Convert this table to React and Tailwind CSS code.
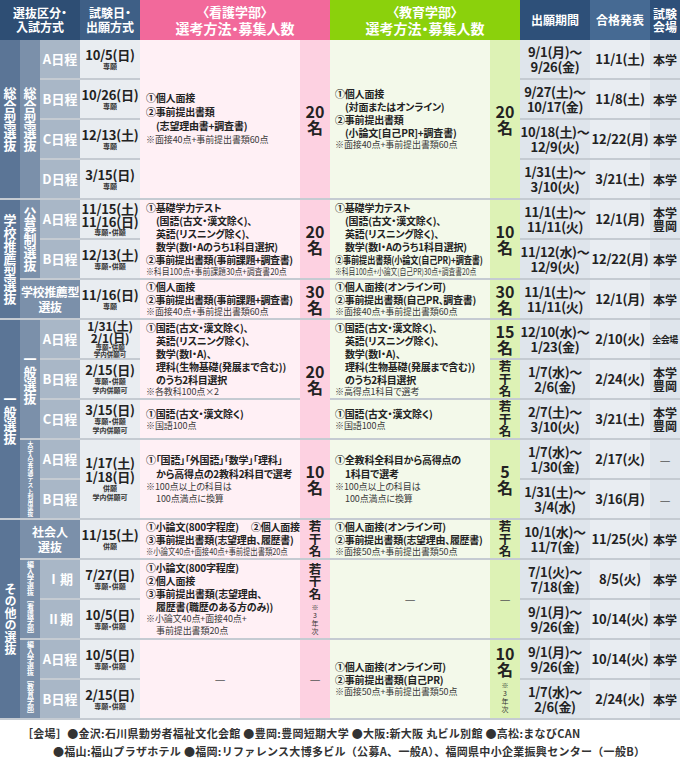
import React from 'react';

const COLS = 'grid grid-cols-[20px_20px_40px_60px_160px_30px_160px_30px_70px_60px_30px]';

const COL = ['', 'col-start-1', 'col-start-2', 'col-start-3', 'col-start-4', 'col-start-5', 'col-start-6', 'col-start-7', 'col-start-8', 'col-start-9', 'col-start-10', 'col-start-11'];
const ROW = ['', 'row-start-1', 'row-start-2', 'row-start-3', 'row-start-4', 'row-start-5', 'row-start-6', 'row-start-7', 'row-start-8', 'row-start-9', 'row-start-10', 'row-start-11', 'row-start-12', 'row-start-13', 'row-start-14', 'row-start-15', 'row-start-16', 'row-start-17'];
const SPAN = ['', '', 'row-span-2', 'row-span-3', 'row-span-4', 'row-span-5'];

const Cell = ({ c, r, span = 1, wide, className = '', children }) => (
  <div className={`${COL[c]} ${ROW[r]} ${SPAN[span]} ${wide ? 'col-span-2' : ''} flex flex-col justify-center ${className}`}>
    {children}
  </div>
);

// vertical label
const V = ({ className = '', children }) => (
  <span className={`[writing-mode:vertical-rl] [font-feature-settings:normal] font-bold text-white leading-none whitespace-nowrap ${className}`}>{children}</span>
);

// method lines
const M = ({ i, className = '', children }) => (
  <div className={`whitespace-nowrap font-bold text-[10px] leading-[13px] tracking-[-0.2px] text-[#222] ${i ? 'pl-[10px]' : ''} ${className}`}>
    {children}
  </div>
);
const Note = ({ i, className = '', children }) => (
  <div className={`whitespace-nowrap text-[9px] leading-[12px] tracking-[-0.1px] text-[#3a3a3a] ${i ? 'pl-[10px]' : ''} ${className}`}>
    {children}
  </div>
);

const Num = ({ n }) => (
  <>
    <div className="text-[16px] leading-[16px] font-bold">{n}</div>
    <div className="text-[16px] leading-[17px] font-bold">名</div>
  </>
);
const Jakkan = () => (
  <div className="flex flex-col items-center text-[12.5px] leading-[12.5px] font-bold [font-feature-settings:normal]">
    <span>若</span>
    <span>干</span>
    <span>名</span>
  </div>
);
const Third = () => (
  <div className="flex flex-col items-center text-[7px] leading-[8px] mt-[3px] text-[#333] [font-feature-settings:normal]">
    <span>※</span>
    <span>3</span>
    <span>年</span>
    <span>次</span>
  </div>
);
const Dash = () => <div className="text-[12px] text-[#555]">—</div>;

const sched = [
  [1, 'A日程'], [2, 'B日程'], [3, 'C日程'], [4, 'D日程'], [5, 'A日程'], [6, 'B日程'],
  [8, 'A日程'], [9, 'B日程'], [10, 'C日程'], [11, 'A日程'], [12, 'B日程'],
  [14, 'Ⅰ期'], [15, 'Ⅱ期'], [16, 'A日程'], [17, 'B日程'],
];

const dates = [
  { r: 1, d: ['10/5(日)'], k: ['専願'] },
  { r: 2, d: ['10/26(日)'], k: ['専願'] },
  { r: 3, d: ['12/13(土)'], k: ['専願'] },
  { r: 4, d: ['3/15(日)'], k: ['専願'] },
  { r: 5, d: ['11/15(土)', '11/16(日)'], k: ['専願・併願'], mid: true },
  { r: 6, d: ['12/13(土)'], k: ['専願・併願'] },
  { r: 7, d: ['11/16(日)'], k: ['専願'] },
  { r: 8, d: ['1/31(土)', '2/1(日)'], k: ['専願・併願', '学内併願可'], tight: true },
  { r: 9, d: ['2/15(日)'], k: ['専願・併願', '学内併願可'] },
  { r: 10, d: ['3/15(日)'], k: ['専願・併願', '学内併願可'] },
  { r: 11, span: 2, d: ['1/17(土)', '1/18(日)'], k: ['併願', '学内併願可'] },
  { r: 13, d: ['11/15(土)'], k: ['併願'] },
  { r: 14, d: ['7/27(日)'], k: ['専願・併願'] },
  { r: 15, d: ['10/5(日)'], k: ['専願・併願'] },
  { r: 16, d: ['10/5(日)'], k: ['専願・併願'] },
  { r: 17, d: ['2/15(日)'], k: ['専願・併願'] },
];

const terms = [
  ['9/1(月)〜', '9/26(金)', '11/1(土)', ['本学']],
  ['9/27(土)〜', '10/17(金)', '11/8(土)', ['本学']],
  ['10/18(土)〜', '12/9(火)', '12/22(月)', ['本学']],
  ['1/31(土)〜', '3/10(火)', '3/21(土)', ['本学']],
  ['11/1(土)〜', '11/11(火)', '12/1(月)', ['本学', '豊岡']],
  ['11/12(水)〜', '12/9(火)', '12/22(月)', ['本学']],
  ['11/1(土)〜', '11/11(火)', '12/1(月)', ['本学']],
  ['12/10(水)〜', '1/23(金)', '2/10(火)', ['全会場']],
  ['1/7(水)〜', '2/6(金)', '2/24(火)', ['本学', '豊岡']],
  ['2/7(土)〜', '3/10(火)', '3/21(土)', ['本学', '豊岡']],
  ['1/7(水)〜', '1/30(金)', '2/17(火)', ['—']],
  ['1/31(土)〜', '3/4(水)', '3/16(月)', ['—']],
  ['10/1(水)〜', '11/7(金)', '11/25(火)', ['本学']],
  ['7/1(火)〜', '7/18(金)', '8/5(火)', ['本学']],
  ['9/1(月)〜', '9/26(金)', '10/14(火)', ['本学']],
  ['9/1(月)〜', '9/26(金)', '10/14(火)', ['本学']],
  ['1/7(水)〜', '2/6(金)', '2/24(火)', ['本学']],
];

const Header = () => (
  <div className={`${COLS} h-[40px] text-white font-bold text-center`}>
    <div className="col-span-3 bg-[#2e4e74] flex flex-col justify-center text-[12px] leading-[14px]">
      <span>選抜区分・</span>
      <span>入試方式</span>
    </div>
    <div className="bg-[#3e5f86] flex flex-col justify-center text-[12px] leading-[14px]">
      <span>試験日・</span>
      <span>出願方式</span>
    </div>
    <div className="col-span-2 bg-[#f2699b] flex flex-col justify-center">
      <span className="text-[13px] leading-[16px]">〈看護学部〉</span>
      <span className="text-[14px] leading-[17px]">選考方法・募集人数</span>
    </div>
    <div className="col-span-2 bg-[#8bd10c] flex flex-col justify-center">
      <span className="text-[13px] leading-[16px]">〈教育学部〉</span>
      <span className="text-[14px] leading-[17px]">選考方法・募集人数</span>
    </div>
    <div className="bg-[#2e5079] flex items-center justify-center text-[12px]">出願期間</div>
    <div className="bg-[#466a93] flex items-center justify-center text-[12px]">合格発表</div>
    <div className="bg-[#2e5079] flex flex-col justify-center text-[12px] leading-[13px]">
      <span>試験</span>
      <span>会場</span>
    </div>
  </div>
);

const App = () => {
  const nurse = 'items-start pl-[6px] bg-[#fff0f5]';
  const edu = 'items-start pl-[5px] bg-[#f3f9ea]';
  const nCount = 'items-center bg-[#fdd1e1] text-[#222]';
  const eCount = 'items-center bg-[#ddf2b5] text-[#222]';

  return (
    <div className="w-[680px] h-[760px] bg-white overflow-hidden font-['Noto_Sans_CJK_JP','Noto_Sans',sans-serif] [font-feature-settings:'palt'] text-[#222]">
      <Header />

      <div className={`${COLS} grid-rows-[repeat(17,38px)] gap-y-[2px] bg-[#c5cbd2] border-b-2 border-[#c5cbd2]`}>
        {/* outer category */}
        <Cell c={1} r={1} span={4} className="items-center bg-[#5b7596]"><V className="text-[13px]">総合型選抜</V></Cell>
        <Cell c={1} r={5} span={3} className="items-center bg-[#5b7596]"><V className="text-[13px]">学校推薦型選抜</V></Cell>
        <Cell c={1} r={8} span={5} className="items-center bg-[#5b7596]"><V className="text-[13px]">一般選抜</V></Cell>
        <Cell c={1} r={13} span={5} className="items-center bg-[#5b7596]"><V className="text-[12px]">その他の選抜</V></Cell>

        {/* sub category */}
        <Cell c={2} r={1} span={4} className="items-center bg-[#7b90aa]"><V className="text-[13px]">総合型選抜</V></Cell>
        <Cell c={2} r={5} span={2} className="items-center bg-[#7b90aa]"><V className="text-[13px]">公募制選抜</V></Cell>
        <Cell c={2} r={7} wide className="items-center bg-[#7b90aa] text-white font-bold text-[12px] leading-[15px] whitespace-nowrap tracking-[-0.4px]">
          <span>学校推薦型</span>
          <span>選抜</span>
        </Cell>
        <Cell c={2} r={8} span={3} className="items-center bg-[#7b90aa]"><V className="text-[13px]">一般選抜</V></Cell>
        <Cell c={2} r={11} span={2} className="items-center bg-[#7b90aa]"><V className="text-[5.8px]">大学入学共通テスト利用選抜</V></Cell>
        <Cell c={2} r={13} wide className="items-center bg-[#7b90aa] text-white font-bold text-[12px] leading-[15px] whitespace-nowrap">
          <span>社会人</span>
          <span>選抜</span>
        </Cell>
        <Cell c={2} r={14} span={2} className="items-center bg-[#7b90aa]"><V className="text-[7px]">編入学選抜［看護学部］</V></Cell>
        <Cell c={2} r={16} span={2} className="items-center bg-[#7b90aa]"><V className="text-[7px]">編入学選抜［教育学部］</V></Cell>

        {/* schedule */}
        {sched.map(([r, t]) => (
          <Cell key={`s${r}`} c={3} r={r} className="items-center bg-[#a9b7c7] text-white font-bold text-[13px]">
            {t}
          </Cell>
        ))}

        {/* exam date */}
        {dates.map((x) => (
          <Cell key={`d${x.r}`} c={4} r={x.r} span={x.span || 1} className="items-center bg-[#e9edf1] text-[#222] whitespace-nowrap">
            {x.d.map((d) => (
              <div
                key={d}
                className={`font-bold tracking-[-0.2px] ${x.tight ? 'text-[12px] leading-[12px]' : x.mid ? 'text-[13px] leading-[13px]' : 'text-[13px] leading-[14px]'}`}
              >
                {d}
              </div>
            ))}
            {x.k.map((k) => (
              <div key={k} className={`font-bold text-[#333] ${x.tight ? 'text-[6.5px] leading-[7px]' : 'text-[7px] leading-[9px]'}`}>{k}</div>
            ))}
          </Cell>
        ))}

        {/* 看護学部 */}
        <Cell c={5} r={1} span={4} className={nurse}>
          <M className="leading-[14px]">①個人面接</M>
          <M className="leading-[14px]">②事前提出書類</M>
          <M i className="leading-[14px]">(志望理由書+調査書)</M>
          <Note className="leading-[14px]">※面接40点+事前提出書類60点</Note>
        </Cell>
        <Cell c={6} r={1} span={4} className={nCount}><Num n="20" /></Cell>

        <Cell c={5} r={5} span={2} className={nurse}>
          <M className="leading-[12px]">①基礎学力テスト</M>
          <M i className="leading-[12px]">(国語(古文・漢文除く)、</M>
          <M i className="leading-[12px]">英語(リスニング除く)、</M>
          <M i className="leading-[12px]">数学(数I・Aのうち1科目選択)</M>
          <M className="leading-[12px] tracking-[-0.4px]">②事前提出書類(事前課題+調査書)</M>
          <Note className="text-[8px] leading-[11px] scale-x-[0.88] origin-left">※科目100点+事前課題30点+調査書20点</Note>
        </Cell>
        <Cell c={6} r={5} span={2} className={nCount}><Num n="20" /></Cell>

        <Cell c={5} r={7} className={nurse}>
          <M className="leading-[12px]">①個人面接</M>
          <M className="leading-[12px] tracking-[-0.4px]">②事前提出書類(事前課題+調査書)</M>
          <Note className="leading-[11px]">※面接40点+事前提出書類60点</Note>
        </Cell>
        <Cell c={6} r={7} className={nCount}><Num n="30" /></Cell>

        <Cell c={5} r={8} span={2} className={nurse}>
          <M>①国語(古文・漢文除く)、</M>
          <M i>英語(リスニング除く)、</M>
          <M i>数学(数I・A)、</M>
          <M i>理科(生物基礎(発展まで含む))</M>
          <M i>のうち2科目選択</M>
          <Note>※各教科100点×2</Note>
        </Cell>
        <Cell c={5} r={10} className={nurse}>
          <M>①国語(古文・漢文除く)</M>
          <Note>※国語100点</Note>
        </Cell>
        <Cell c={6} r={8} span={3} className={nCount}><Num n="20" /></Cell>

        <Cell c={5} r={11} span={2} className={nurse}>
          <M className="leading-[14px]">①「国語」「外国語」「数学」「理科」</M>
          <M i className="leading-[14px]">から高得点の2教科2科目で選考</M>
          <Note className="leading-[11px]">※100点以上の科目は</Note>
          <Note i className="leading-[11px]">100点満点に換算</Note>
        </Cell>
        <Cell c={6} r={11} span={2} className={nCount}><Num n="10" /></Cell>

        <Cell c={5} r={13} className={nurse}>
          <M className="text-[9.5px] leading-[12px]">①小論文(800字程度)<span className="ml-[12px]">②個人面接</span></M>
          <M className="text-[9.5px] leading-[12px] tracking-[-0.3px]">③事前提出書類(志望理由、履歴書)</M>
          <Note className="text-[8px] leading-[11px] scale-x-[0.82] origin-left">※小論文40点+面接40点+事前提出書類20点</Note>
        </Cell>
        <Cell c={6} r={13} className={nCount}><Jakkan /></Cell>

        <Cell c={5} r={14} span={2} className={nurse}>
          <M>①小論文(800字程度)</M>
          <M>②個人面接</M>
          <M>③事前提出書類(志望理由、</M>
          <M i>履歴書(職歴のある方のみ))</M>
          <Note>※小論文40点+面接40点+</Note>
          <Note i>事前提出書類20点</Note>
        </Cell>
        <Cell c={6} r={14} span={2} className={nCount}>
          <Jakkan />
          <Third />
        </Cell>

        <Cell c={5} r={16} span={2} className="items-center bg-[#fff0f5]"><Dash /></Cell>
        <Cell c={6} r={16} span={2} className={nCount}><Dash /></Cell>

        {/* 教育学部 */}
        <Cell c={7} r={1} span={4} className={edu}>
          <M>①個人面接</M>
          <M i>(対面またはオンライン)</M>
          <M>②事前提出書類</M>
          <M i>(小論文[自己PR]+調査書)</M>
          <Note>※面接40点+事前提出書類60点</Note>
        </Cell>
        <Cell c={8} r={1} span={4} className={eCount}><Num n="20" /></Cell>

        <Cell c={7} r={5} span={2} className={edu}>
          <M className="leading-[12px]">①基礎学力テスト</M>
          <M i className="leading-[12px]">(国語(古文・漢文除く)、</M>
          <M i className="leading-[12px]">英語(リスニング除く)、</M>
          <M i className="leading-[12px]">数学(数I・Aのうち1科目選択)</M>
          <M className="text-[9.5px] leading-[12px] tracking-[-0.2px] scale-x-[0.82] origin-left">②事前提出書類(小論文(自己PR)+調査書)</M>
          <Note className="text-[8px] leading-[11px] scale-x-[0.76] origin-left">※科目100点+小論文(自己PR)30点+調査書20点</Note>
        </Cell>
        <Cell c={8} r={5} span={2} className={eCount}><Num n="10" /></Cell>

        <Cell c={7} r={7} className={edu}>
          <M className="leading-[12px]">①個人面接(オンライン可)</M>
          <M className="leading-[12px] tracking-[-0.3px]">②事前提出書類(自己PR、調査書)</M>
          <Note className="leading-[11px]">※面接40点+事前提出書類60点</Note>
        </Cell>
        <Cell c={8} r={7} className={eCount}><Num n="30" /></Cell>

        <Cell c={7} r={8} span={2} className={edu}>
          <M>①国語(古文・漢文除く)、</M>
          <M i>英語(リスニング除く)、</M>
          <M i>数学(数I・A)、</M>
          <M i>理科(生物基礎(発展まで含む))</M>
          <M i>のうち2科目選択</M>
          <Note>※高得点1科目で選考</Note>
        </Cell>
        <Cell c={8} r={8} className={eCount}><Num n="15" /></Cell>
        <Cell c={8} r={9} className={eCount}><Jakkan /></Cell>

        <Cell c={7} r={10} className={edu}>
          <M>①国語(古文・漢文除く)</M>
          <Note>※国語100点</Note>
        </Cell>
        <Cell c={8} r={10} className={eCount}><Jakkan /></Cell>

        <Cell c={7} r={11} span={2} className={edu}>
          <M className="leading-[14px]">①全教科全科目から高得点の</M>
          <M i className="leading-[14px]">1科目で選考</M>
          <Note className="leading-[11px]">※100点以上の科目は</Note>
          <Note i className="leading-[11px]">100点満点に換算</Note>
        </Cell>
        <Cell c={8} r={11} span={2} className={eCount}><Num n="5" /></Cell>

        <Cell c={7} r={13} className={edu}>
          <M className="leading-[12px]">①個人面接(オンライン可)</M>
          <M className="leading-[12px] tracking-[-0.3px]">②事前提出書類(志望理由、履歴書)</M>
          <Note className="leading-[11px]">※面接50点+事前提出書類50点</Note>
        </Cell>
        <Cell c={8} r={13} className={eCount}><Jakkan /></Cell>

        <Cell c={7} r={14} span={2} className="items-center bg-[#f3f9ea]"><Dash /></Cell>
        <Cell c={8} r={14} span={2} className={eCount}><Dash /></Cell>

        <Cell c={7} r={16} span={2} className={edu}>
          <M>①個人面接(オンライン可)</M>
          <M>②事前提出書類(自己PR)</M>
          <Note>※面接50点+事前提出書類50点</Note>
        </Cell>
        <Cell c={8} r={16} span={2} className={eCount}>
          <Num n="10" />
          <Third />
        </Cell>

        {/* period / result / venue */}
        {terms.map(([a, b, res, venue], idx) => (
          <React.Fragment key={`t${idx}`}>
            <Cell c={9} r={idx + 1} className="items-center bg-[#dfe5ec] font-bold text-[13px] leading-[15px] tracking-[-0.3px] whitespace-nowrap">
              <span>{a}</span>
              <span>{b}</span>
            </Cell>
            <Cell c={10} r={idx + 1} className="items-center bg-[#e9edf2] font-bold text-[13px] tracking-[-0.2px] whitespace-nowrap">
              {res}
            </Cell>
            <Cell c={11} r={idx + 1} className="items-center bg-[#dfe5ec] font-bold text-[12px] leading-[13px] whitespace-nowrap">
              {venue.map((v) => (
                <span key={v} className={v === '全会場' ? 'text-[9px] tracking-[-0.5px]' : v === '—' ? 'text-[#555] font-normal' : ''}>{v}</span>
              ))}
            </Cell>
          </React.Fragment>
        ))}
      </div>

      {/* venues footnote */}
      <div className="pl-[22px] pt-[4px] text-[11px] leading-[18px] font-bold text-[#333] whitespace-nowrap tracking-[0.3px] [font-feature-settings:normal]">
        <div>［会場］●金沢:石川県勤労者福祉文化会館 ●豊岡:豊岡短期大学 ●大阪:新大阪 丸ビル別館 ●高松:まなびCAN</div>
        <div className="pl-[31px]">●福山:福山プラザホテル ●福岡:リファレンス大博多ビル（公募A、一般A）、福岡県中小企業振興センター（一般B）</div>
      </div>
    </div>
  );
};

export default App;
